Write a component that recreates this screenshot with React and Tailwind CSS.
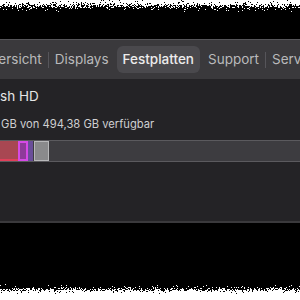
import { useMemo } from 'react'

const font = { fontFamily: 'Inter, "Noto Sans", "Liberation Sans", sans-serif' }

function rng(seed) {
  let a = seed
  return () => {
    a |= 0
    a = (a + 0x6d2b79f5) | 0
    let t = Math.imul(a ^ (a >>> 15), 1 | a)
    t = (t + Math.imul(t ^ (t >>> 7), 61 | t)) ^ t
    return ((t ^ (t >>> 14)) >>> 0) / 4294967296
  }
}

function Noise({ probs, seed, className }) {
  const d = useMemo(() => {
    const r = rng(seed)
    let s = ''
    probs.forEach((p, y) => {
      for (let x = 0; x < 300; x++) {
        if (r() < p) s += `M${x} ${y}h1v1h-1z`
      }
    })
    return s
  }, [probs, seed])
  return (
    <svg width="300" height={probs.length} className={className} shapeRendering="crispEdges">
      <rect width="300" height={probs.length} fill="#000" />
      <path d={d} fill="#fff" />
    </svg>
  )
}

const topProbs = [0.98, 0.96, 0.92, 0.86, 0.72, 0.52, 0.36, 0.22, 0.12, 0.06, 0.03, 0.01]
const bottomProbs = [0.01, 0.03, 0.06, 0.12, 0.25, 0.45, 0.7, 0.88, 0.95, 0.98, 1, 1, 1, 1, 1, 1]

function Tab({ label, active }) {
  return (
    <div
      className={
        active
          ? 'rounded-md bg-[#4a494d] px-[6px] py-[3px] font-medium text-[#ececec]'
          : 'px-[6px] py-[3px] text-[#b9b9bb]'
      }
    >
      {label}
    </div>
  )
}

export default function App() {
  return (
    <div className="flex h-[300px] w-[300px] flex-col overflow-hidden bg-black" style={font}>
      <Noise probs={topProbs} seed={7} className="shrink-0" />
      <div className="h-[27px] shrink-0" />

      <div className="flex h-[40px] shrink-0 items-center overflow-hidden border-t border-[#565559] bg-[#3a393c] text-[13.5px]">
        <div className="ml-[-26px] flex items-center whitespace-nowrap">
          <Tab label="Übersicht" />
          <div className="h-[16px] w-px bg-[#56555a]" />
          <Tab label="Displays" />
          <div className="w-[2px]" />
          <Tab label="Festplatten" active />
          <div className="w-[2px]" />
          <Tab label="Support" />
          <div className="h-[16px] w-px bg-[#56555a]" />
          <Tab label="Service" />
        </div>
      </div>

      <div className="h-[142px] shrink-0 overflow-hidden bg-[#242326] pt-[7px]">
        <div className="ml-[-51px] whitespace-nowrap text-[13.5px] text-[#e6e6e6]">Macintosh HD</div>
        <div className="ml-[-30px] mt-[10px] whitespace-nowrap text-[11.2px] text-[#cfcfd1]">
          227,7 GB von 494,38 GB verfügbar
        </div>
        <div className="mt-[7px] flex h-[22px] border-y border-[#5b5a5e] bg-[#3d3c40]">
          <div className="w-[18px] border-b-2 border-[#e0405a] bg-[#a84752]" />
          <div className="w-[10px] border-2 border-[#d64ae6] bg-[#8e3a9a]" />
          <div className="w-[5px] bg-[#6a4e99]" />
          <div className="w-[1px] bg-[#3d3c40]" />
          <div className="w-[15px] border border-[#b8b8ba] bg-[#8a8a8c]" />
        </div>
      </div>

      <div className="h-[2px] shrink-0 bg-[#3a393c]" />
      <div className="flex-1" />
      <Noise probs={bottomProbs} seed={13} className="shrink-0" />
    </div>
  )
}
